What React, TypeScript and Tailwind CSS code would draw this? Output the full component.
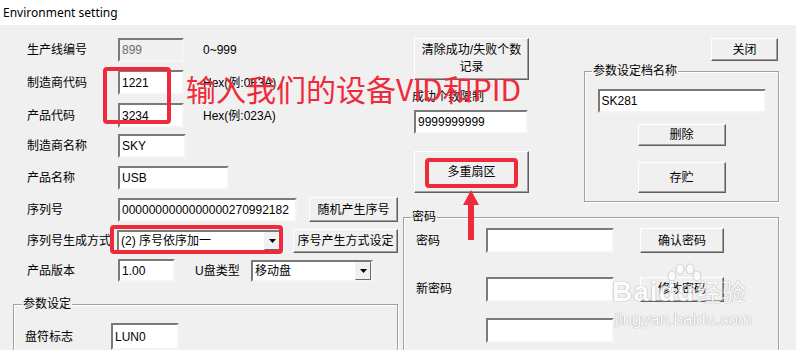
import React from "react";

const FONT = { fontFamily: '"Liberation Sans", "Noto Sans CJK SC", sans-serif' };

function Input({ className = "", value = "", disabled = false }: { className?: string; value?: string; disabled?: boolean }) {
  return (
    <div
      className={
        "flex items-center border-2 border-t-[#7a7a7a] border-l-[#7a7a7a] border-b-[#f4f4f4] border-r-[#f4f4f4] pl-[2px] text-[12px] leading-none " +
        (disabled ? "bg-[#f0f0f0] text-[#6d6d6d] " : "bg-white text-black ") +
        className
      }
    >
      {value}
    </div>
  );
}

function Btn({ className = "", children }: { className?: string; children: React.ReactNode }) {
  return (
    <div
      className={
        "flex flex-col items-center justify-center border border-t-white border-l-white border-b-[#5f5f5f] border-r-[#5f5f5f] shadow-[inset_-1px_-1px_0_#a0a0a0] bg-[#f0f0f0] text-[12px] leading-[14px] text-black " +
        className
      }
    >
      {children}
    </div>
  );
}

function Combo({ className = "", value }: { className?: string; value: string }) {
  return (
    <div
      className={
        "flex items-stretch border-2 border-t-[#7a7a7a] border-l-[#7a7a7a] border-b-[#f4f4f4] border-r-[#f4f4f4] bg-white " +
        className
      }
    >
      <div className="flex-1 flex items-center pl-[2px] text-[12px] leading-none">{value}</div>
      <div className="w-[16px] flex items-center justify-center border border-t-[#f0f0f0] border-l-[#f0f0f0] border-b-[#696969] border-r-[#696969] bg-[#f0f0f0]">
        <svg width="7" height="4" viewBox="0 0 7 4">
          <path d="M0 0 H7 L3.5 4 Z" fill="#000" />
        </svg>
      </div>
    </div>
  );
}

function Group({ className = "", title, children, titleClass = "left-[7px]" }: { className?: string; title: string; children: React.ReactNode; titleClass?: string }) {
  return (
    <div className={"relative border border-[#a0a0a0] shadow-[1px_1px_0_#ffffff,inset_1px_1px_0_#ffffff] " + className}>
      <span className={"absolute -top-[9px] bg-[#f0f0f0] px-[1px] text-[12px] leading-[16px] text-black " + titleClass}>{title}</span>
      {children}
    </div>
  );
}

function Label({ className = "", children }: { className?: string; children: React.ReactNode }) {
  return <div className={"text-[12px] leading-none text-black shrink-0 " + className}>{children}</div>;
}

export default function App() {
  return (
    <div className="relative w-[796px] h-[350px] overflow-hidden bg-[#f0f0f0]" style={FONT}>
      {/* Title bar */}
      <div className="h-[25px] bg-white flex items-center pl-[3px] text-[12px] text-black" style={{ fontFamily: '"Noto Sans", "Liberation Sans", sans-serif' }}>
        Environment setting
      </div>

      <div className="flex">
        {/* Left column */}
        <div className="w-[403px] flex flex-col">
          <div className="mt-[13px] h-[24px] flex items-center">
            <Label className="w-[118px] pl-[27px]">生产线编号</Label>
            <Input className="w-[66px] h-[24px]" value="899" disabled />
            <Label className="ml-[19px]">0~999</Label>
          </div>
          <div className="mt-[8px] h-[25px] flex items-center">
            <Label className="w-[118px] pl-[27px]">制造商代码</Label>
            <Input className="w-[66px] h-[25px]" value="1221" />
            <Label className="ml-[19px]">Hex(例:0F3A)</Label>
          </div>
          <div className="mt-[8px] h-[25px] flex items-center">
            <Label className="w-[118px] pl-[27px]">产品代码</Label>
            <Input className="w-[66px] h-[25px]" value="3234" />
            <Label className="ml-[19px]">Hex(例:023A)</Label>
          </div>
          <div className="mt-[6px] h-[24px] flex items-center">
            <Label className="w-[118px] pl-[27px]">制造商名称</Label>
            <Input className="w-[68px] h-[24px]" value="SKY" />
          </div>
          <div className="mt-[8px] h-[24px] flex items-center">
            <Label className="w-[118px] pl-[27px]">产品名称</Label>
            <Input className="w-[111px] h-[24px]" value="USB" />
          </div>
          <div className="mt-[7px] h-[25px] flex items-center">
            <Label className="w-[118px] pl-[27px]">序列号</Label>
            <Input className="w-[179px] h-[24px]" value="0000000000000000270992182" />
            <Btn className="ml-[12px] w-[89px] h-[25px]">随机产生序号</Btn>
          </div>
          <div className="mt-[7px] h-[24px] flex items-center">
            <Label className="w-[117px] pl-[27px]">序列号生成方式</Label>
            <Combo className="w-[165px] h-[22px]" value="(2) 序号依序加一" />
            <Btn className="ml-[11px] w-[105px] h-[24px]">序号产生方式设定</Btn>
          </div>
          <div className="mt-[6px] h-[23px] flex items-center">
            <Label className="w-[118px] pl-[27px]">产品版本</Label>
            <Input className="w-[57px] h-[23px]" value="1.00" />
            <Label className="ml-[20px] w-[56px]">U盘类型</Label>
            <Combo className="w-[122px] h-[22px]" value="移动盘" />
          </div>
          <Group className="mt-[22px] ml-[13px] w-[385px] h-[60px]" title="参数设定" titleClass="left-[8px]">
            <div className="mt-[18px] h-[27px] flex items-center">
              <Label className="w-[97px] pl-[11px]">盘符标志</Label>
              <Input className="w-[68px] h-[27px]" value="LUN0" />
            </div>
          </Group>
        </div>

        {/* Right column */}
        <div className="w-[376px] flex flex-col">
          <div className="flex">
            <div className="ml-[11px] w-[115px] flex flex-col pt-[13px]">
              <Btn className="w-[115px] h-[42px] leading-[17px]">
                <span>清除成功/失败个数</span>
                <span>记录</span>
              </Btn>
              <div className="h-[30px] pt-[10px] -ml-[2px] text-[12px] leading-[14px]">成功个数限制</div>
              <Input className="w-[114px] h-[24px]" value="9999999999" />
              <Btn className="mt-[17px] w-[115px] h-[42px]">多重扇区</Btn>
            </div>
            <div className="ml-[55px] w-[195px] flex flex-col pt-[13px]">
              <Btn className="self-end mr-[1px] w-[67px] h-[23px]">关闭</Btn>
              <Group className="mt-[10px] w-[195px] h-[131px] flex flex-col items-center" title="参数设定档名称" titleClass="left-[7px]">
                <Input className="mt-[17px] w-[168px] h-[24px]" value="SK281" />
                <Btn className="mt-[11px] w-[88px] h-[22px]">删除</Btn>
                <Btn className="mt-[16px] w-[88px] h-[31px]">存贮</Btn>
              </Group>
            </div>
          </div>
          <Group className="mt-[15px] w-[376px] h-[150px]" title="密码" titleClass="left-[7px]">
            <div className="mt-[10px] h-[25px] flex items-center">
              <Label className="w-[82px] pl-[12px]">密码</Label>
              <Input className="w-[128px] h-[25px]" value="" />
              <Btn className="ml-[26px] w-[84px] h-[25px]">确认密码</Btn>
            </div>
            <div className="mt-[23px] h-[26px] flex items-center">
              <Label className="w-[82px] pl-[12px]">新密码</Label>
              <Input className="w-[128px] h-[25px]" value="" />
              <Btn className="ml-[26px] w-[84px] h-[25px]">修改密码</Btn>
            </div>
            <div className="mt-[16px] h-[25px] flex items-center">
              <div className="w-[82px]" />
              <Input className="w-[128px] h-[25px]" value="" />
            </div>
          </Group>
        </div>
      </div>

      {/* Red annotations */}
      <div className="absolute left-[103px] top-[67px] w-[68px] h-[57px] border-[4px] border-[#ee2a3b] rounded-[4px]" />
      <div className="absolute left-[110px] top-[225px] w-[173px] h-[29px] border-[4px] border-[#ee2a3b] rounded-[4px]" />
      <div className="absolute left-[425px] top-[158px] w-[93px] h-[30px] border-[4px] border-[#ee2a3b] rounded-[4px]" />
      <div
        className="absolute left-[186px] top-[69px] text-[30px] leading-[38px] text-[#ee2a3b] whitespace-nowrap"
        style={{ fontFamily: '"Noto Sans CJK SC", "Liberation Sans", sans-serif' }}
      >
        输入我们的设备VID和PID
      </div>
      <svg className="absolute left-[460px] top-[188px]" width="22" height="54" viewBox="0 0 22 54">
        <path d="M11 2 L19 17 L14 17 L14 52 L8 52 L8 17 L3 17 Z" fill="#ee2a3b" />
      </svg>

      {/* Baidu watermark */}
      <div className="absolute left-[612px] top-[262px] w-[150px] h-[80px] opacity-80 pointer-events-none">
        <svg className="absolute left-[52px] top-[0px]" width="40" height="30" viewBox="0 0 40 30">
          <g fill="rgba(255,255,255,0.85)" stroke="#c8c8c8" strokeWidth="1">
            <ellipse cx="8" cy="14" rx="4" ry="5" />
            <ellipse cx="16" cy="7" rx="4" ry="5" />
            <ellipse cx="26" cy="7" rx="4" ry="5" />
            <ellipse cx="33" cy="14" rx="4" ry="5" />
          </g>
        </svg>
        <div
          className="absolute left-0 top-[13px] text-[28px] leading-[32px] font-bold tracking-[1px] text-white whitespace-nowrap"
          style={{ fontFamily: '"Liberation Sans", "Noto Sans CJK SC", sans-serif', textShadow: "0 0 1px #9a9a9a, 0 0 1px #9a9a9a" }}
        >
          Baidu
          <span className="ml-[2px] text-[24px] font-normal" style={{ fontFamily: '"Noto Sans CJK SC", sans-serif' }}>经验</span>
        </div>
        <div
          className="absolute left-[3px] top-[49px] text-[17px] leading-[18px] text-white whitespace-nowrap"
          style={{ fontFamily: '"Liberation Sans", sans-serif', textShadow: "0 0 1px #9a9a9a, 0 0 1px #9a9a9a" }}
        >
          jingyan.baidu.com
        </div>
      </div>
    </div>
  );
}
